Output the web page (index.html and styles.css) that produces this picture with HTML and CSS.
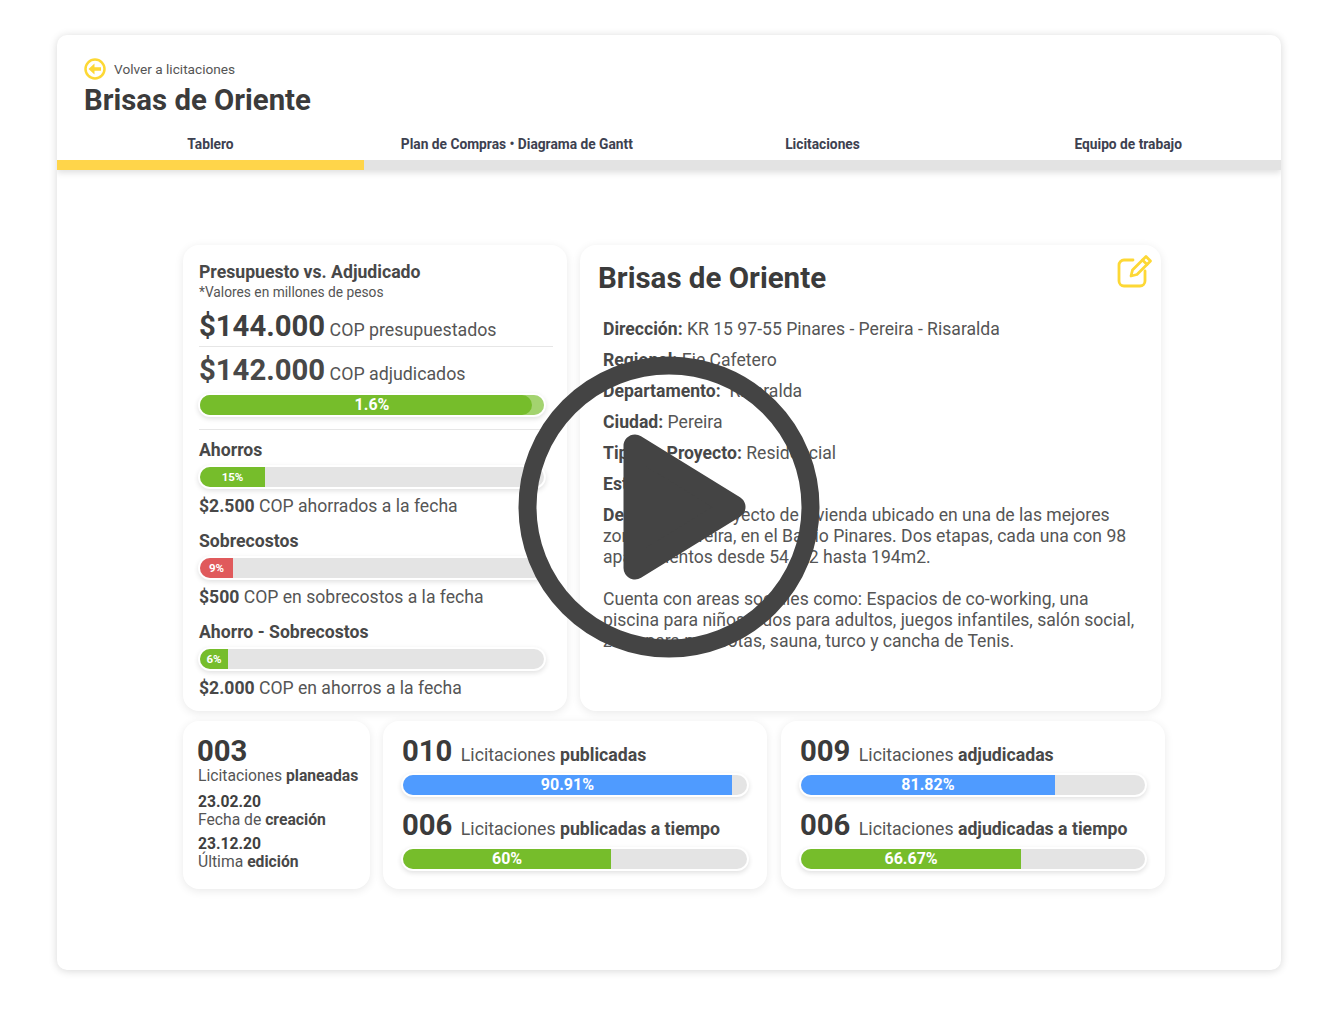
FILE: index.html
```html
<!DOCTYPE html>
<html lang="es">

<head>
  <meta charset="UTF-8">
  <meta name="viewport" content="width=device-width, initial-scale=1.0">
  <title>Brisas de Oriente</title>
  <link rel="stylesheet" href="styles.css">
</head>

<body>
  <div class="window">
    <header class="head">
      <div class="head-top">
        <a href="#" class="back">
          <svg class="back-icon" width="22" height="22" viewBox="0 0 22 22">
            <circle cx="11" cy="11" r="9.500" fill="none" stroke="#fdd835" stroke-width="2.500" />
            <path d="M4.500 11l6-5.500v3.700H17v3.600H10.500v3.700z" fill="#fdd835" />
          </svg>
          <span>Volver a licitaciones</span>
        </a>
        <h1>Brisas de Oriente</h1>
      </div>
      <ul class="tabs">
        <li class="selected"><a href="#">Tablero</a></li>
        <li><a href="#">Plan de Compras • Diagrama de Gantt</a></li>
        <li><a href="#">Licitaciones</a></li>
        <li><a href="#">Equipo de trabajo</a></li>
      </ul>
    </header>

    <main class="content">
      <div class="row row-top">
        <section class="card budget">
          <h3>Presupuesto vs. Adjudicado</h3>
          <p class="note">*Valores en millones de pesos</p>
          <p class="amount amount-first"><b>$144.000</b> COP presupuestados</p>
          <p class="amount amount-second"><b>$142.000</b> COP adjudicados</p>
          <div class="bar">
            <div class="fill fill-soft" style="width: 100%"><span class="fill-dark"></span><span class="label">1.6%</span></div>
          </div>
          <hr>
          <h3 class="metric-title">Ahorros</h3>
          <div class="bar small">
            <div class="fill" style="width: 18.9%"><span class="label">15%</span></div>
          </div>
          <p class="metric-text"><b>$2.500</b> COP ahorrados a la fecha</p>
          <h3 class="metric-title">Sobrecostos</h3>
          <div class="bar small">
            <div class="fill red" style="width: 9.6%"><span class="label">9%</span></div>
          </div>
          <p class="metric-text"><b>$500</b> COP en sobrecostos a la fecha</p>
          <h3 class="metric-title">Ahorro - Sobrecostos</h3>
          <div class="bar small">
            <div class="fill" style="width: 8.1%"><span class="label">6%</span></div>
          </div>
          <p class="metric-text"><b>$2.000</b> COP en ahorros a la fecha</p>
        </section>

        <section class="card project">
          <div class="project-head">
            <h2>Brisas de Oriente</h2>
            <svg class="edit" width="36" height="36" viewBox="0 0 36 36" fill="none" stroke="#fdd835" stroke-width="2.800" stroke-linecap="round" stroke-linejoin="round">
              <path d="M16 6H7a5 5 0 0 0-5 5v16a5 5 0 0 0 5 5h16a5 5 0 0 0 5-5V17" />
              <path d="M29 2.500l4.500 4.500L20 20.500l-6 1.500 1.500-6z" />
              <path d="M25.500 6l4.500 4.500" />
            </svg>
          </div>
          <div class="facts">
            <p><b>Dirección:</b> KR 15 97-55 Pinares - Pereira - Risaralda</p>
            <p><b>Regional:</b> Eje Cafetero</p>
            <p><b>Departamento:</b>&nbsp; Risaralda</p>
            <p><b>Ciudad:</b> Pereira</p>
            <p><b>Tipo de Proyecto:</b> Residencial</p>
            <p><b>Estado:</b></p>
          </div>
          <div class="desc">
            <p><b>Descripción:</b> Proyecto de vivienda ubicado en una de las mejores zonas de Pereira, en el Barrio Pinares. Dos etapas, cada una con 98 apartamentos desde 54 m2 hasta 194m2.</p>
            <p>Cuenta con areas sociales como: Espacios de co-working, una piscina para niños y dos para adultos, juegos infantiles, salón social, zona para mascotas, sauna, turco y cancha de Tenis.</p>
          </div>
        </section>
      </div>

      <div class="row row-bottom">
        <section class="card dates">
          <div class="num">003</div>
          <p class="dates-label">Licitaciones <b>planeadas</b></p>
          <p class="date"><b>23.02.20</b><br>Fecha de <b>creación</b></p>
          <p class="date"><b>23.12.20</b><br>Última <b>edición</b></p>
        </section>

        <section class="card stats">
          <div class="stat"><span class="num">010</span> Licitaciones <b>publicadas</b></div>
          <div class="bar">
            <div class="fill blue" style="width: 95.6%"><span class="label">90.91%</span></div>
          </div>
          <div class="stat stat-next"><span class="num">006</span> Licitaciones <b>publicadas a tiempo</b></div>
          <div class="bar">
            <div class="fill" style="width: 60.5%"><span class="label">60%</span></div>
          </div>
        </section>

        <section class="card stats">
          <div class="stat"><span class="num">009</span> Licitaciones <b>adjudicadas</b></div>
          <div class="bar">
            <div class="fill blue" style="width: 73.8%"><span class="label">81.82%</span></div>
          </div>
          <div class="stat stat-next"><span class="num">006</span> Licitaciones <b>adjudicadas a tiempo</b></div>
          <div class="bar">
            <div class="fill" style="width: 64%"><span class="label">66.67%</span></div>
          </div>
        </section>
      </div>
    </main>
  </div>

  <!-- play button over the video frame -->
  <svg class="play" width="302" height="302" viewBox="0 0 302 302" fill="#444" stroke="#444">
    <circle cx="151" cy="151" r="141.500" fill="none" stroke-width="18" />
    <path d="M117 90L216 151 117 212z" stroke-width="23" stroke-linejoin="round" />
  </svg>
</body>

</html>
```

FILE: styles.css
```css
* {
  padding: 0;
  margin: 0;
  box-sizing: border-box;
}

body {
  font-family: Roboto, "Liberation Sans", sans-serif;
  color: #444;
  background: #fff;
  position: relative;
  height: 1014px;
  overflow: hidden;
  padding: 35px 57px 0;
}

a {
  color: inherit;
  text-decoration: none;
}

.window {
  width: 1224px;
  height: 935px;
  background: #fff;
  border-radius: 10px;
  box-shadow: 0 1px 8px rgba(0, 0, 0, 0.16);
  overflow: hidden;
}

/* header */
.head {
  height: 135px;
  box-shadow: 0 3px 6px rgba(0, 0, 0, 0.12);
}

.head-top {
  height: 91px;
  padding: 23px 0 0 27px;
}

.back {
  display: flex;
  align-items: center;
  height: 22px;
  font-size: 13.650px;
  color: #555;
}

.back-icon {
  margin-right: 8px;
}

.head h1 {
  font-size: 29.350px;
  line-height: 36px;
  font-weight: 700;
  color: #3b3b3b;
  margin-top: 2px;
}

.tabs {
  display: flex;
  list-style: none;
  height: 44px;
}

.tabs li {
  flex: 1;
  text-align: center;
  font-size: 13.750px;
  font-weight: 700;
  line-height: 36px;
  color: #3d4150;
  border-bottom: 10px solid #e3e3e3;
}

.tabs .selected {
  flex: none;
  width: 307px;
  border-bottom-color: #ffd54a;
}

/* cards */
.content {
  padding: 75px 0 0 126px;
}

.row {
  display: flex;
}

.row-top {
  gap: 13px;
  height: 466px;
}

.row-bottom {
  gap: 13px;
  height: 168px;
  margin-top: 10px;
}

.stats + .stats {
  margin-left: 1px;
}

.card {
  background: #fff;
  border-radius: 16px;
  box-shadow: 0 2px 10px rgba(0, 0, 0, 0.09);
}

.card b {
  font-weight: 700;
}

/* bars */
.bar {
  height: 24px;
  width: 348px;
  margin-left: -1px;
  padding: 2px;
  background: linear-gradient(#e4e4e4, #e4e4e4) content-box, #fff;
  border-radius: 12px;
  box-shadow: 0 2px 5px rgba(0, 0, 0, 0.12);
}

.bar .fill {
  height: 20px;
  background: #76bd2b;
  border-radius: 10px 0 0 10px;
  color: #fff;
  font-size: 16px;
  font-weight: 700;
  line-height: 20px;
  text-align: center;
  white-space: nowrap;
  position: relative;
}

.bar .fill.blue {
  background: #4f9bff;
}

.bar .fill.red {
  background: #e05a5c;
}

.bar .fill-soft {
  background: #a3d36f;
  border-radius: 10px;
}

.fill-dark {
  position: absolute;
  left: 0;
  top: 0;
  bottom: 0;
  width: 332px;
  background: #76bd2b;
  border-radius: 10px;
}

.label {
  position: relative;
}

.bar.small .fill {
  font-size: 11.500px;
}

/* budget card */
.budget {
  width: 384px;
  padding: 16px 14px 0 16px;
}

.budget h3 {
  font-size: 17.650px;
  line-height: 22px;
  font-weight: 700;
  color: #484848;
}

.note {
  font-size: 13.750px;
  line-height: 16px;
  margin-top: 1px;
  color: #555;
}

.amount {
  font-size: 17.800px;
  color: #555;
  line-height: 33px;
}

.amount b {
  font-size: 29.300px;
  color: #3f3f3f;
}

.amount-first {
  margin-top: 10px;
  border-bottom: 1px solid #e6e6e6;
}

.amount-second {
  margin-top: 7px;
  margin-bottom: 3px;
}

.amount-second b {
  color: #484848;
}

.budget hr {
  border: 0;
  border-top: 1px solid #e6e6e6;
  margin: 12px 0 0;
}

.budget .metric-title {
  margin-top: 9px;
  margin-bottom: 4px;
}

.metric-text {
  font-size: 17.600px;
  line-height: 22px;
  color: #555;
  margin-top: 6px;
  margin-bottom: 13px;
}

.metric-text b {
  color: #484848;
}

/* project card */
.project {
  width: 581px;
  padding: 16px 20px 0 18px;
}

.project-head {
  display: flex;
  justify-content: space-between;
  height: 53px;
}

.project-head h2 {
  font-size: 29.500px;
  line-height: 34px;
  font-weight: 700;
  color: #3b3b3b;
}

.edit {
  margin: -7px -12px 0 0;
}

.facts,
.desc {
  padding-left: 5px;
  font-size: 17.600px;
  color: #555;
}

.facts p {
  line-height: 31px;
}

.facts b,
.desc b {
  color: #484848;
}

.desc {
  margin-top: 5px;
  line-height: 21px;
  margin-right: -4px;
}

.desc p + p {
  margin-top: 21px;
}

/* bottom row */
.num {
  font-size: 29.300px;
  font-weight: 700;
  color: #3b3b3b;
  line-height: 34px;
}

.dates {
  width: 187px;
  padding: 13px 0 0 15px;
  font-size: 15.700px;
  color: #555;
}

.dates .num {
  margin-left: -1px;
}

.dates b {
  color: #484848;
}

.dates-label {
  line-height: 18px;
  margin-top: -1px;
}

.date {
  margin-top: 6px;
  line-height: 18px;
}

.dates-label + .date {
  margin-top: 8px;
}

.date b:first-child {
  color: #3f3f3f;
}

.stats {
  width: 384px;
  padding: 13px 0 0 19px;
}

.stat {
  font-size: 17.700px;
  line-height: 34px;
  color: #555;
  margin-bottom: 1px;
}

.stat .num {
  margin-right: 4px;
}

.stat b {
  color: #484848;
}

.stat-next {
  margin-top: 11px;
}

/* play overlay */
.play {
  position: absolute;
  left: 518px;
  top: 356px;
}
```
